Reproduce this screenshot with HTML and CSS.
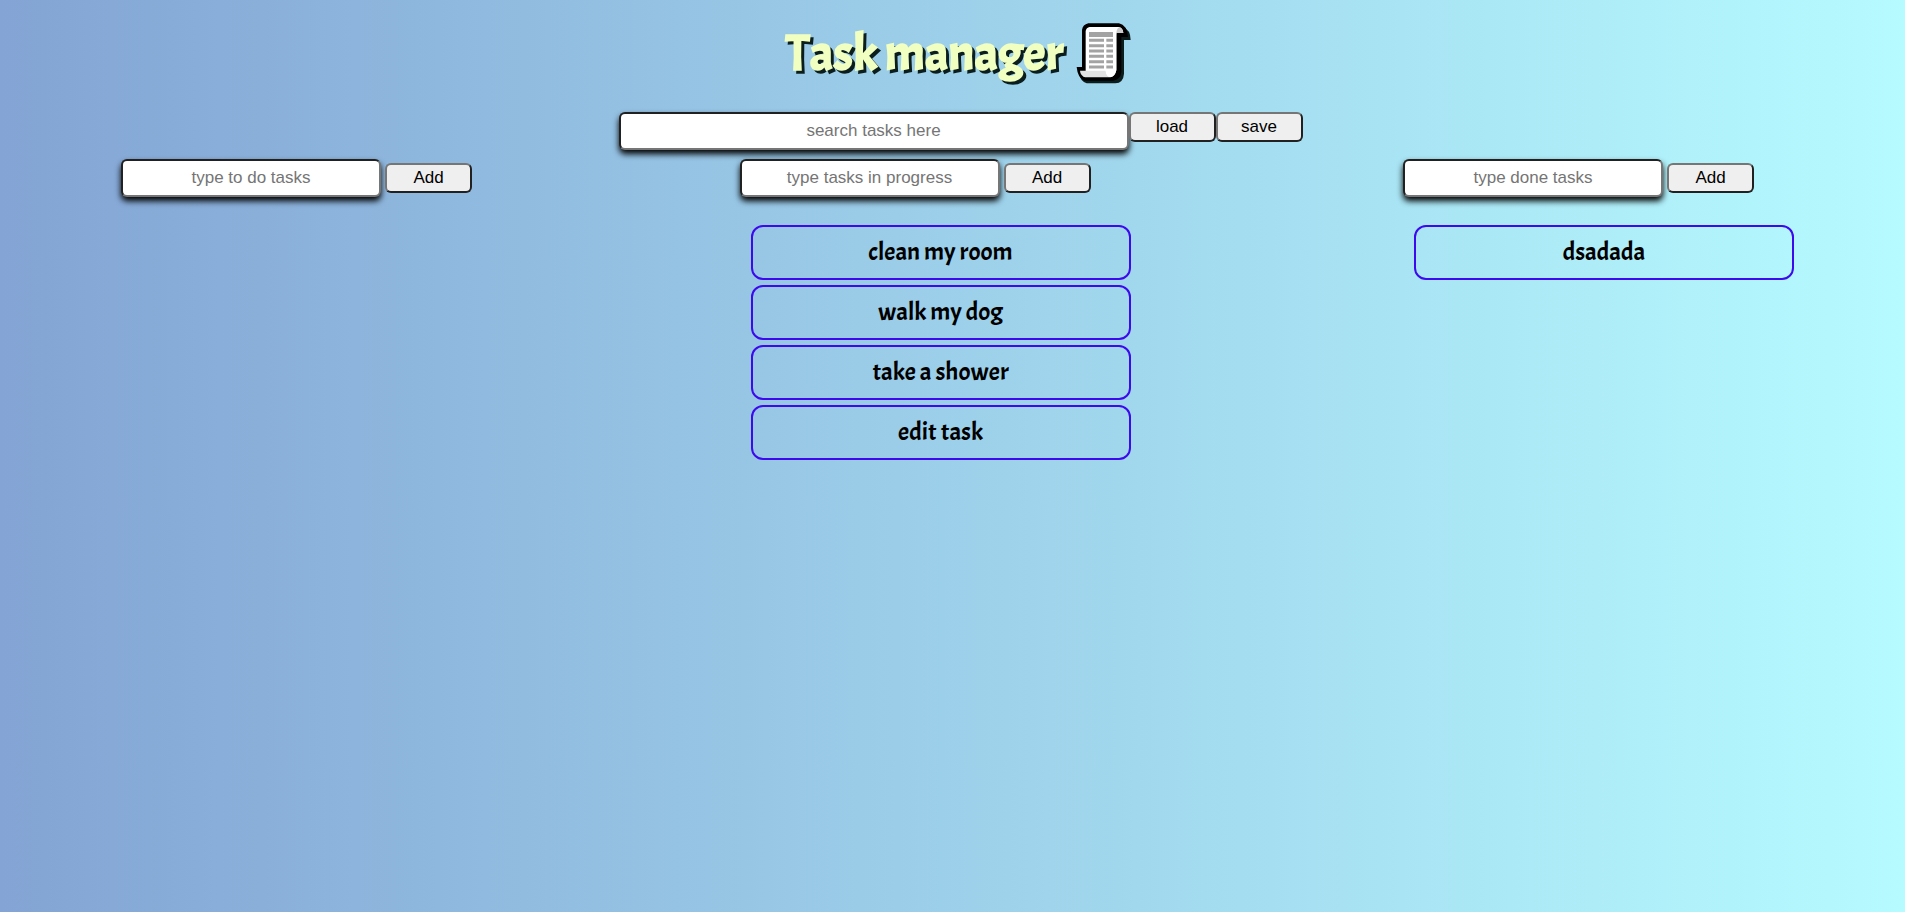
FILE: index.html
```html
<!DOCTYPE html>
<html lang="en">
<head>
<meta charset="utf-8">
<title>Task manager</title>
<link rel="stylesheet" href="styles.css">
</head>
<body>
<header class="header">
  <h1 class="title">Task manager
    <svg class="scroll" viewBox="0 0 210 225" aria-hidden="true">
      <path d="M63 34H160Q185 45 185 75H165V176Q163 204 139 205H53Q33 197 31 176V164H46V52Q48 37 63 34Z" fill="#0b1d1d"/>
      <path d="M58 25H150Q174 30 177 66H157V172Q154 195 132 197H47Q26 190 23 156H39V45Q41 29 58 25Z" fill="#000"/>
      <path d="M62 36H150Q142 45 142 60V166Q137 184 126 186H44L42 168H50V48Q52 38 62 36Z" fill="#fff"/>
      <path d="M33 167H110Q111 182 124 187H48Q34 181 33 167Z" fill="#e2e2e2"/>
      <path d="M110 160V168Q111 184 124 187Q139 184 142 165V54H163Q162 38 148 36H134V160Z" fill="#fff"/>
      <path d="M142 54Q143 39 152 37Q161 41 163 54Z" fill="#ccc"/>
      <path d="M60 51H132V66H60Z" fill="#a3a3a3"/>
      <path d="M60 76H105M60 92H105M60 108H105M60 124H105M60 140H105M60 156H105M112 76H132M112 92H132M112 108H132M112 124H132M112 140H132M112 156H132" stroke="#a3a3a3" stroke-width="9"/>
    </svg>
  </h1>
  <div class="toolbar">
    <input class="field search" type="text" placeholder="search tasks here" aria-label="search tasks here">
    <button class="btn" type="button">load</button>
    <button class="btn" type="button">save</button>
  </div>
</header>
<main class="board">
  <section class="column">
    <form class="add">
      <input class="field" type="text" placeholder="type to do tasks" aria-label="type to do tasks">
      <button class="btn" type="button">Add</button>
    </form>
  </section>
  <section class="column middle">
    <form class="add">
      <input class="field" type="text" placeholder="type tasks in progress" aria-label="type tasks in progress">
      <button class="btn" type="button">Add</button>
    </form>
    <ul class="list">
      <li class="task">clean my room</li>
      <li class="task">walk my dog</li>
      <li class="task">take a shower</li>
      <li class="task">edit task</li>
    </ul>
  </section>
  <section class="column">
    <form class="add">
      <input class="field" type="text" placeholder="type done tasks" aria-label="type done tasks">
      <button class="btn" type="button">Add</button>
    </form>
    <ul class="list">
      <li class="task">dsadada</li>
    </ul>
  </section>
</main>
</body>
</html>
```
FILE: styles.css
```css
* {
  box-sizing: border-box;
}

body {
  margin: 0;
  min-height: 100vh;
  background: linear-gradient(to right, #83a4d4, #b6fbff);
  font-family: Acme, Lato, sans-serif;
}

.header {
  padding: 15px 0 0 16px;
}

.title {
  display: flex;
  justify-content: center;
  align-items: flex-start;
  gap: 6px;
  margin: 0 0 19px;
  padding-left: 4px;
  color: #f1ffc0;
  font-size: 50px;
  font-weight: 700;
  line-height: 78px;
  text-shadow: 3px 3px #0b1d1d;
}

.scroll {
  width: 70px;
  height: 75px;
}

.toolbar {
  display: flex;
  justify-content: center;
  align-items: flex-start;
}

.field {
  width: 260px;
  height: 38px;
  padding: 0 8px;
  border: 2px inset #767676;
  border-radius: 6px;
  background: #fff;
  box-shadow: 0 4px 6px #000;
  font: 17px "Liberation Sans", Arial, sans-serif;
  text-align: center;
}

.field::placeholder {
  color: #757575;
}

.search {
  width: 510px;
}

.btn {
  width: 87px;
  height: 30px;
  padding: 0;
  border: 2px outset #767676;
  border-radius: 6px;
  background: #efefef;
  color: #000;
  font: 17px "Liberation Sans", Arial, sans-serif;
}

.board {
  display: flex;
  justify-content: space-between;
  padding: 9px 111px 0 121px;
}

.middle {
  padding-right: 5px;
}

.add {
  display: flex;
  align-items: center;
  gap: 4px;
}

.list {
  display: grid;
  gap: 5px;
  margin: 28px 0 0 11px;
  padding: 0;
  list-style: none;
}

.task {
  width: 380px;
  padding: 10px 0;
  border: 2px solid #3d09ee;
  border-radius: 12px;
  font-size: 25px;
  line-height: 31px;
  text-align: center;
}
```
